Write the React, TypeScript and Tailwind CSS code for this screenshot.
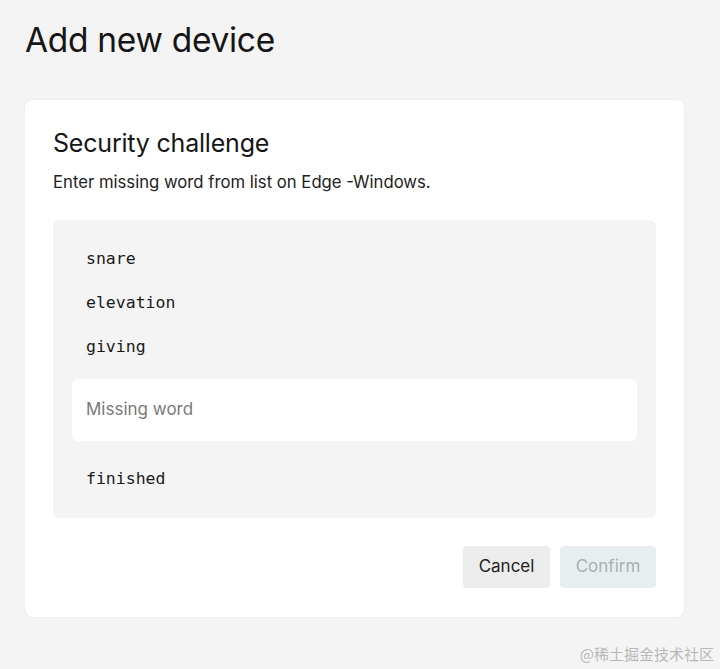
import React from "react";

export default function App() {
  return (
    <div className="relative w-[720px] h-[669px] bg-[#f4f4f4] overflow-hidden font-['Inter',sans-serif] text-[#161616]">
      <div className="px-[25px] pt-[18px]">
        <h1 className="text-[33.5px] leading-[44px] font-normal tracking-[-0.3px]">Add new device</h1>
        <div className="mt-[38px] w-[659px] bg-white rounded-[8px] shadow-[0_0_2px_rgba(0,0,0,0.08)] px-[28px] pt-[27px] pb-[29px]">
          <h2 className="text-[25px] leading-[32px] font-normal tracking-[-0.2px]">Security challenge</h2>
          <p className="mt-[11px] text-[16.7px] leading-[24px] text-[#222]">Enter missing word from list on Edge -Windows.</p>
          <div className="mt-[26px] bg-[#f4f4f4] rounded-[6px] px-[19px] pt-[29px] pb-[29px] flex flex-col">
            <div className="font-['DejaVu_Sans_Mono',monospace] text-[16.5px] leading-[20px] text-[#1a1a1a] pl-[14px] flex flex-col gap-[24px]">
              <span>snare</span>
              <span>elevation</span>
              <span>giving</span>
            </div>
            <div className="mt-[22px] h-[62px] bg-white rounded-[6px] flex items-center px-[14px] text-[17px] text-[#7a7a7a]">
              Missing word
            </div>
            <div className="mt-[28px] font-['DejaVu_Sans_Mono',monospace] text-[16.5px] leading-[20px] text-[#1a1a1a] pl-[14px]">
              finished
            </div>
          </div>
          <div className="mt-[28px] flex justify-end gap-[10px]">
            <button className="h-[42px] w-[87px] rounded-[4px] bg-[#ececec] text-[17px] text-[#222]">Cancel</button>
            <button className="h-[42px] w-[96px] rounded-[4px] bg-[#e8eef0] text-[17px] text-[#a9b0b3]">Confirm</button>
          </div>
        </div>
      </div>
      <div className="absolute right-[6px] bottom-[4px] text-[15px] text-[#b8b8b8] font-['Noto_Sans_CJK_SC',sans-serif]">@稀土掘金技术社区</div>
    </div>
  );
}
